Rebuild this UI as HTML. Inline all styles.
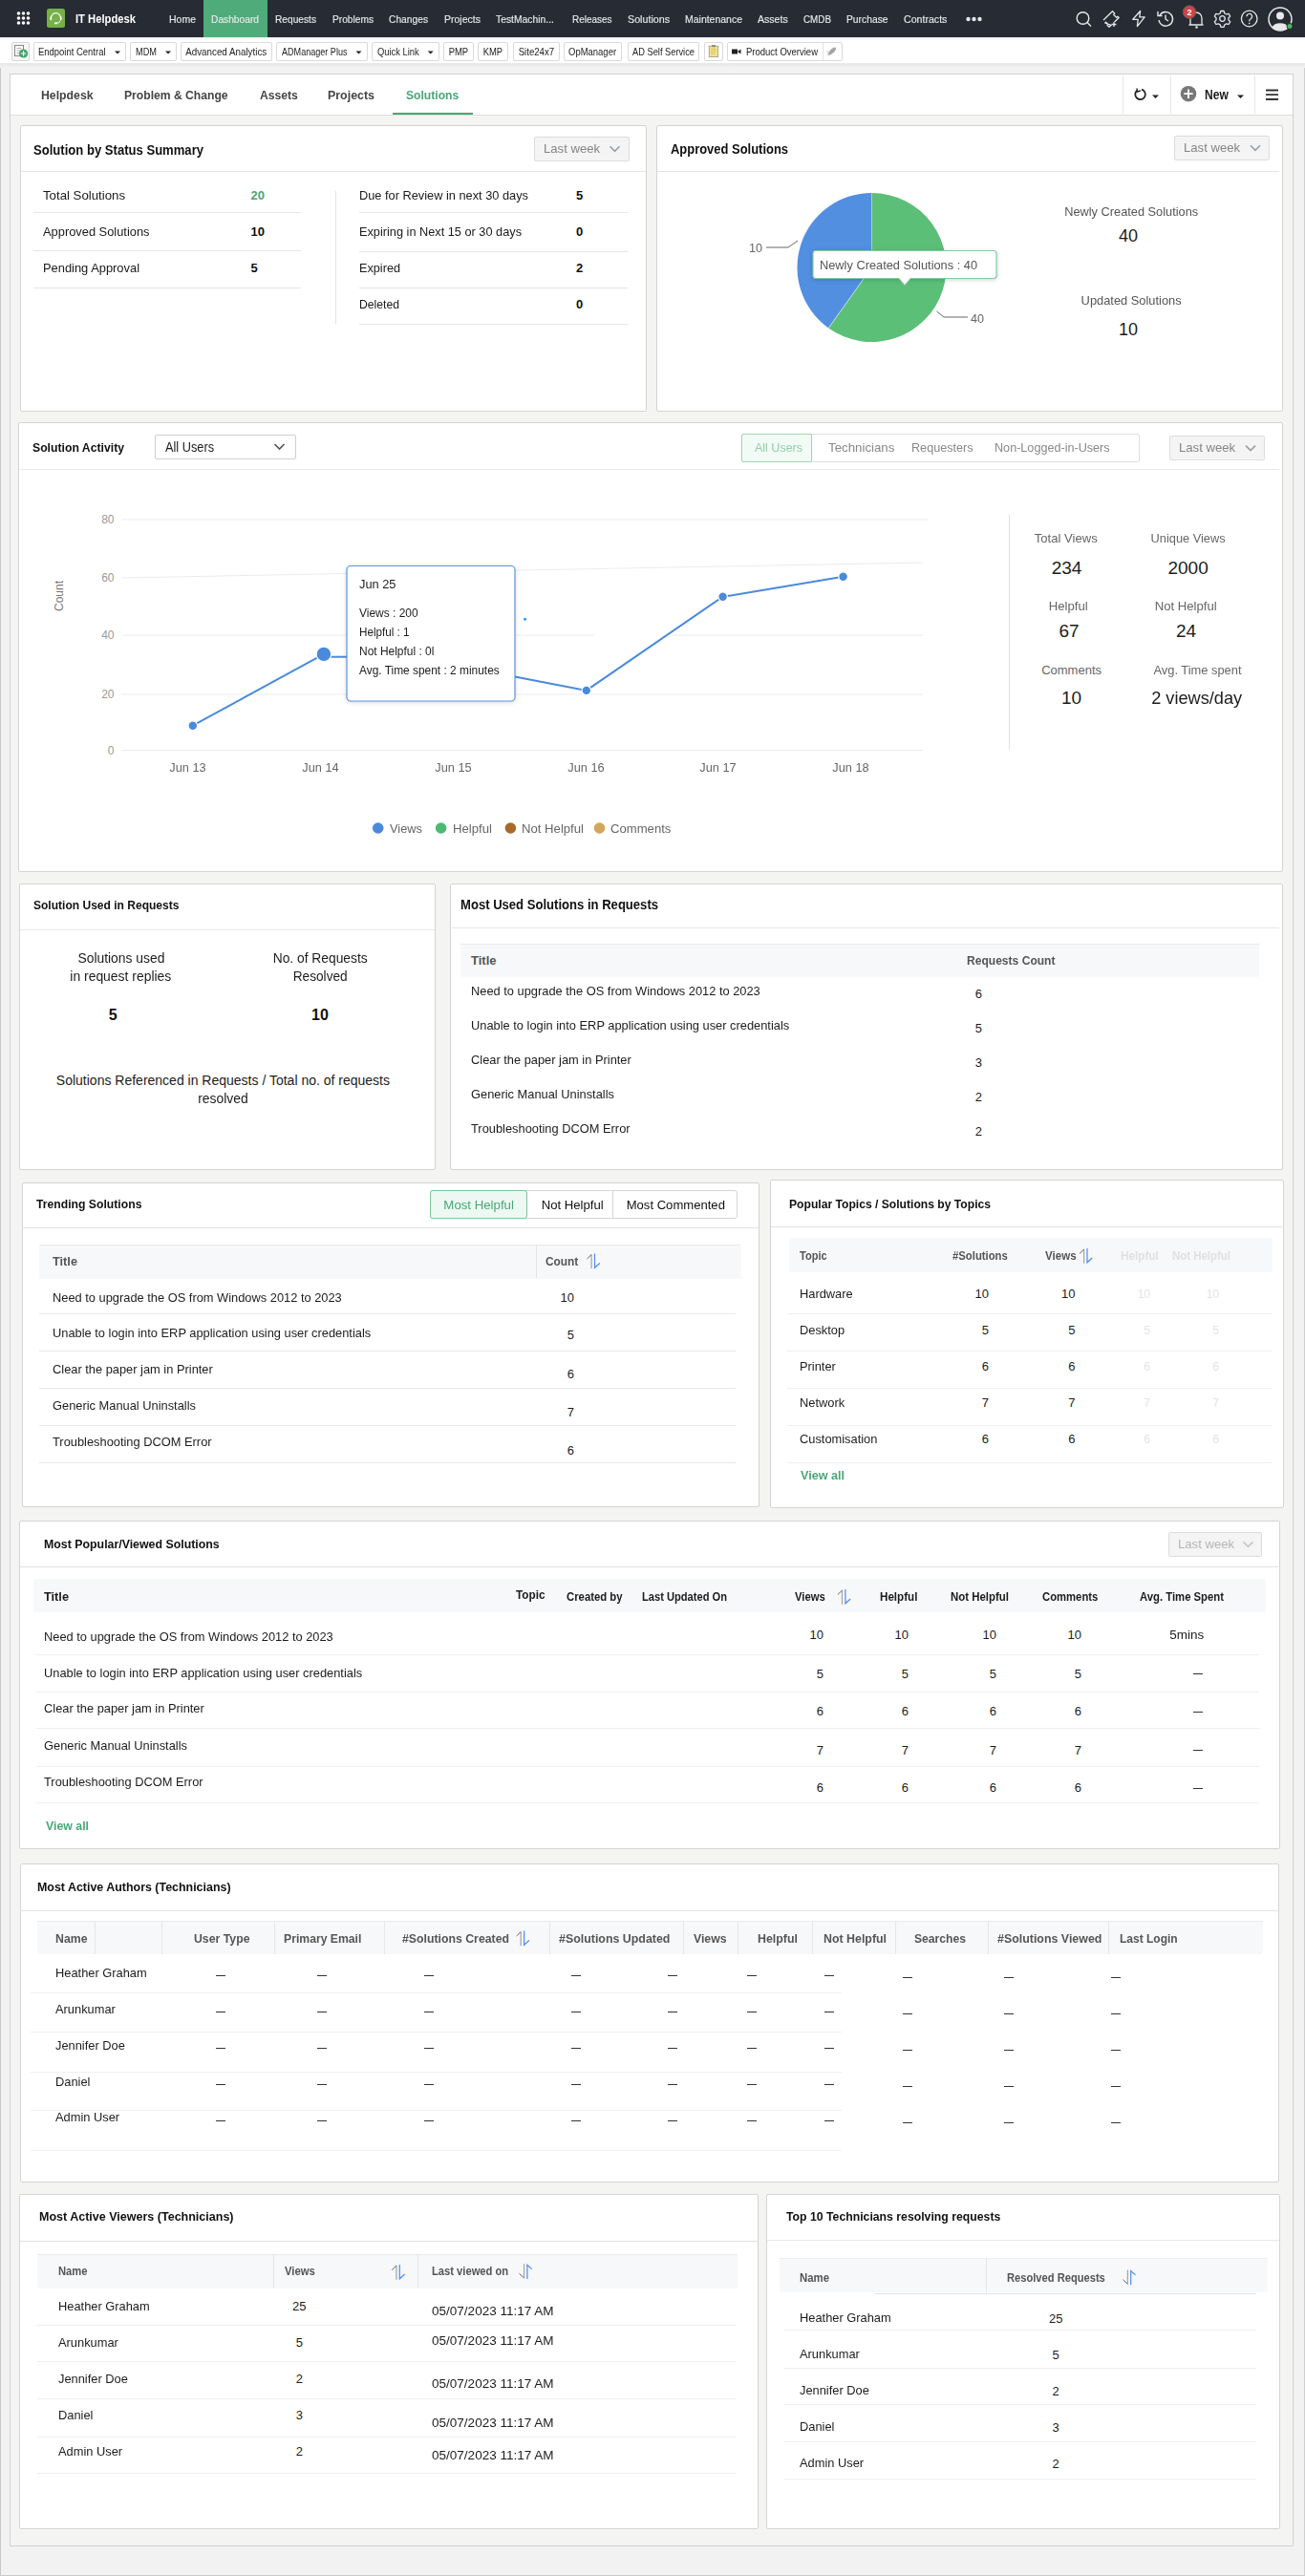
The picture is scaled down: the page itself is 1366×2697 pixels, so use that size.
<!DOCTYPE html>
<html><head><meta charset="utf-8"><title>Solutions Dashboard</title>
<style>
html,body{margin:0;padding:0;}
body{width:1366px;height:2697px;position:relative;overflow:hidden;font-family:"Liberation Sans",sans-serif;background:#f1f1f1;}
#bg>div{position:absolute;}
#tx>span{position:absolute;white-space:nowrap;}
svg{position:absolute;left:0;top:0;}
</style></head><body>
<div id="bg">
<div style="left:0px;top:0px;width:1366px;height:2697px;background:#f2f2f2;"></div>
<div style="left:10px;top:77px;width:1344px;height:2589px;background:#f4f4f2;border:1px solid #d2d2d2;box-sizing:border-box;"></div>
<div style="left:11px;top:78px;width:1342px;height:42px;background:#ffffff;"></div>
<div style="left:11px;top:120px;width:1342px;height:1px;background:#dedede"></div>
<div style="left:0px;top:71px;width:1px;height:2626px;background:#c9c9c9"></div>
<div style="left:1365px;top:71px;width:1px;height:2626px;background:#cfcfcf"></div>
<div style="left:0px;top:2696px;width:1366px;height:1px;background:#cacaca"></div>
<div style="left:0px;top:0px;width:1366px;height:39px;background:#262b34;"></div>
<div style="left:213px;top:0px;width:67px;height:39px;background:#4fab7a;"></div>
<div style="left:49px;top:9px;width:19px;height:19.5px;background:#76b048;border-radius:2.5px;"></div>
<div style="left:0px;top:39px;width:1366px;height:28px;background:#ffffff;"></div>
<div style="left:0px;top:39px;width:1366px;height:3px;background:linear-gradient(#ededed,#fff);"></div>
<div style="left:0px;top:66px;width:1366px;height:4px;background:linear-gradient(#e6e6e6,#f1f1f1);"></div>
<div style="left:12px;top:44px;width:19px;height:20px;background:#f7f7f7;border:1px solid #d5d5d5;box-sizing:border-box;border-radius:2px;"></div>
<div style="left:34.5px;top:44px;width:97.5px;height:20px;background:#fff;border:1px solid #d9d9d9;box-sizing:border-box;border-radius:2px;"></div>
<div style="left:136px;top:44px;width:49px;height:20px;background:#fff;border:1px solid #d9d9d9;box-sizing:border-box;border-radius:2px;"></div>
<div style="left:189px;top:44px;width:96px;height:20px;background:#fff;border:1px solid #d9d9d9;box-sizing:border-box;border-radius:2px;"></div>
<div style="left:289px;top:44px;width:95.5px;height:20px;background:#fff;border:1px solid #d9d9d9;box-sizing:border-box;border-radius:2px;"></div>
<div style="left:389px;top:44px;width:70.69999999999999px;height:20px;background:#fff;border:1px solid #d9d9d9;box-sizing:border-box;border-radius:2px;"></div>
<div style="left:464px;top:44px;width:31.5px;height:20px;background:#fff;border:1px solid #d9d9d9;box-sizing:border-box;border-radius:2px;"></div>
<div style="left:500.3px;top:44px;width:31.400000000000034px;height:20px;background:#fff;border:1px solid #d9d9d9;box-sizing:border-box;border-radius:2px;"></div>
<div style="left:537px;top:44px;width:48.5px;height:20px;background:#fff;border:1px solid #d9d9d9;box-sizing:border-box;border-radius:2px;"></div>
<div style="left:590px;top:44px;width:61px;height:20px;background:#fff;border:1px solid #d9d9d9;box-sizing:border-box;border-radius:2px;"></div>
<div style="left:656.6px;top:44px;width:75.79999999999995px;height:20px;background:#fff;border:1px solid #d9d9d9;box-sizing:border-box;border-radius:2px;"></div>
<div style="left:737px;top:44px;width:20px;height:20px;background:#fff;border:1px solid #d9d9d9;box-sizing:border-box;border-radius:2px;"></div>
<div style="left:761px;top:44px;width:120.5px;height:20px;background:#fff;border:1px solid #d9d9d9;box-sizing:border-box;border-radius:2px;"></div>
<div style="left:861px;top:45px;width:1px;height:18px;background:#e3e3e3"></div>
<div style="left:411px;top:118px;width:84px;height:2px;background:#48a776;"></div>
<div style="left:1175px;top:79px;width:1px;height:40px;background:#e8e8e8"></div>
<div style="left:1225px;top:79px;width:1px;height:40px;background:#e8e8e8"></div>
<div style="left:1313px;top:79px;width:1px;height:40px;background:#e8e8e8"></div>
<div style="left:21px;top:131px;width:656px;height:300px;background:#fff;border:1px solid #d4d4d4;box-sizing:border-box;border-radius:2px;"></div>
<div style="left:22px;top:179px;width:654px;height:1px;background:#e3e3e3"></div>
<div style="left:559px;top:143px;width:99.5px;height:25.5px;background:#f4f4f4;border:1px solid #dddddd;box-sizing:border-box;border-radius:2px;"></div>
<div style="left:35px;top:222px;width:280px;height:1px;background:#e6e6e6"></div>
<div style="left:35px;top:262px;width:280px;height:1px;background:#e6e6e6"></div>
<div style="left:35px;top:301px;width:280px;height:1px;background:#e6e6e6"></div>
<div style="left:351px;top:200px;width:1px;height:139px;background:#e3e3e3"></div>
<div style="left:376px;top:222px;width:281px;height:1px;background:#e6e6e6"></div>
<div style="left:376px;top:263px;width:281px;height:1px;background:#e6e6e6"></div>
<div style="left:376px;top:301px;width:281px;height:1px;background:#e6e6e6"></div>
<div style="left:376px;top:339px;width:281px;height:1px;background:#e6e6e6"></div>
<div style="left:687px;top:131px;width:656px;height:300px;background:#fff;border:1px solid #d4d4d4;box-sizing:border-box;border-radius:2px;"></div>
<div style="left:688px;top:179px;width:651px;height:1px;background:#e3e3e3"></div>
<div style="left:1229px;top:142px;width:100px;height:25.5px;background:#f4f4f4;border:1px solid #dddddd;box-sizing:border-box;border-radius:2px;"></div>
<div style="left:19px;top:442px;width:1324px;height:471px;background:#fff;border:1px solid #d4d4d4;box-sizing:border-box;border-radius:2px;"></div>
<div style="left:21px;top:491px;width:1318px;height:1px;background:#e8e8e8"></div>
<div style="left:162px;top:455px;width:147.5px;height:26px;background:#fff;border:1px solid #cfcfcf;box-sizing:border-box;border-radius:2px;"></div>
<div style="left:776px;top:454px;width:416.5px;height:29.5px;background:#fff;border:1px solid #e0e0e0;box-sizing:border-box;border-radius:2px;"></div>
<div style="left:776px;top:454px;width:73.5px;height:29.5px;background:#f2faf5;border:1px solid #9fd5b4;box-sizing:border-box;border-radius:2px;"></div>
<div style="left:1224.3px;top:456.4px;width:99.70000000000005px;height:25.30000000000001px;background:#f4f4f4;border:1px solid #dddddd;box-sizing:border-box;border-radius:2px;"></div>
<div style="left:1056px;top:539px;width:1px;height:246px;background:#e3e3e3"></div>
<div style="left:20px;top:924.5px;width:436px;height:300.5px;background:#fff;border:1px solid #d4d4d4;box-sizing:border-box;border-radius:2px;"></div>
<div style="left:21px;top:973px;width:434px;height:1px;background:#e8e8e8"></div>
<div style="left:470.5px;top:924.5px;width:872.5px;height:300.5px;background:#fff;border:1px solid #d4d4d4;box-sizing:border-box;border-radius:2px;"></div>
<div style="left:471px;top:971px;width:868px;height:1px;background:#e8e8e8"></div>
<div style="left:481.5px;top:988px;width:836px;height:35px;background:#f7f8fa;border-radius:2px;"></div>
<div style="left:481.5px;top:988px;width:836.0px;height:1px;background:#e9eaee"></div>
<div style="left:22.5px;top:1238px;width:772.5px;height:340px;background:#fff;border:1px solid #d4d4d4;box-sizing:border-box;border-radius:2px;"></div>
<div style="left:23px;top:1285px;width:771px;height:1px;background:#e3e3e3"></div>
<div style="left:449.5px;top:1246px;width:322px;height:30px;background:#fff;border:1px solid #d5d5d5;box-sizing:border-box;border-radius:3px;"></div>
<div style="left:449.5px;top:1246px;width:102px;height:30px;background:#eef8f2;border:1px solid #7cc79b;box-sizing:border-box;border-radius:3px;"></div>
<div style="left:641px;top:1247px;width:1px;height:29px;background:#d5d5d5"></div>
<div style="left:41px;top:1303.5px;width:734.5px;height:35px;background:#f7f8fa;border-radius:2px;"></div>
<div style="left:41px;top:1303px;width:734px;height:1px;background:#e8e9ec"></div>
<div style="left:561px;top:1304px;width:1px;height:34px;background:#e3e4e8"></div>
<div style="left:41px;top:1375px;width:729px;height:1px;background:#e8e8e8"></div>
<div style="left:41px;top:1414px;width:729px;height:1px;background:#e8e8e8"></div>
<div style="left:41px;top:1453px;width:729px;height:1px;background:#e8e8e8"></div>
<div style="left:41px;top:1492px;width:729px;height:1px;background:#e8e8e8"></div>
<div style="left:41px;top:1531px;width:729px;height:1px;background:#e8e8e8"></div>
<div style="left:806px;top:1235px;width:538px;height:344px;background:#fff;border:1px solid #d4d4d4;box-sizing:border-box;border-radius:2px;"></div>
<div style="left:807px;top:1284px;width:535px;height:1px;background:#e3e3e3"></div>
<div style="left:826px;top:1296px;width:505.5px;height:35.5px;background:#f7f8fa;border-radius:2px;"></div>
<div style="left:824px;top:1375px;width:508px;height:1px;background:#efefef"></div>
<div style="left:824px;top:1414px;width:508px;height:1px;background:#efefef"></div>
<div style="left:824px;top:1453px;width:508px;height:1px;background:#efefef"></div>
<div style="left:824px;top:1492px;width:508px;height:1px;background:#efefef"></div>
<div style="left:824px;top:1531px;width:508px;height:1px;background:#efefef"></div>
<div style="left:20px;top:1592px;width:1320px;height:344px;background:#fff;border:1px solid #d4d4d4;box-sizing:border-box;border-radius:2px;"></div>
<div style="left:21px;top:1640px;width:1317px;height:1px;background:#e3e3e3"></div>
<div style="left:1222.6px;top:1604px;width:98.90000000000009px;height:25.700000000000045px;background:#f4f4f4;border:1px solid #dddddd;box-sizing:border-box;border-radius:2px;"></div>
<div style="left:34.5px;top:1653.3px;width:1290.5px;height:35px;background:#f7f8fa;border-radius:2px;"></div>
<div style="left:1249px;top:1752px;width:10px;height:1px;background:#333"></div>
<div style="left:1249px;top:1792px;width:10px;height:1px;background:#333"></div>
<div style="left:1249px;top:1832px;width:10px;height:1px;background:#333"></div>
<div style="left:1249px;top:1872px;width:10px;height:1px;background:#333"></div>
<div style="left:38px;top:1731.5px;width:1280px;height:1px;background:#efefef"></div>
<div style="left:38px;top:1770.5px;width:1280px;height:1px;background:#efefef"></div>
<div style="left:38px;top:1809px;width:1280px;height:1px;background:#efefef"></div>
<div style="left:38px;top:1848.5px;width:1280px;height:1px;background:#efefef"></div>
<div style="left:38px;top:1887px;width:1280px;height:1px;background:#efefef"></div>
<div style="left:20.5px;top:1950.5px;width:1318.5px;height:334.0px;background:#fff;border:1px solid #d4d4d4;box-sizing:border-box;border-radius:2px;"></div>
<div style="left:21px;top:1999.5px;width:1317px;height:1px;background:#e3e3e3"></div>
<div style="left:38.7px;top:2011px;width:1283.3px;height:34.7px;background:#f7f8fa;border-radius:2px;"></div>
<div style="left:38.7px;top:2011px;width:1283.3px;height:1px;background:#e9eaee"></div>
<div style="left:99px;top:2011px;width:1px;height:35px;background:#e6e7ea"></div>
<div style="left:169px;top:2011px;width:1px;height:35px;background:#e6e7ea"></div>
<div style="left:287px;top:2011px;width:1px;height:35px;background:#e6e7ea"></div>
<div style="left:402px;top:2011px;width:1px;height:35px;background:#e6e7ea"></div>
<div style="left:575px;top:2011px;width:1px;height:35px;background:#e6e7ea"></div>
<div style="left:715px;top:2011px;width:1px;height:35px;background:#e6e7ea"></div>
<div style="left:772px;top:2011px;width:1px;height:35px;background:#e6e7ea"></div>
<div style="left:850px;top:2011px;width:1px;height:35px;background:#e6e7ea"></div>
<div style="left:937px;top:2011px;width:1px;height:35px;background:#e6e7ea"></div>
<div style="left:1034px;top:2011px;width:1px;height:35px;background:#e6e7ea"></div>
<div style="left:1160px;top:2011px;width:1px;height:35px;background:#e6e7ea"></div>
<div style="left:226px;top:2068px;width:10px;height:1px;background:#333"></div>
<div style="left:332px;top:2068px;width:10px;height:1px;background:#333"></div>
<div style="left:444px;top:2068px;width:10px;height:1px;background:#333"></div>
<div style="left:598px;top:2068px;width:10px;height:1px;background:#333"></div>
<div style="left:699px;top:2068px;width:10px;height:1px;background:#333"></div>
<div style="left:782px;top:2068px;width:10px;height:1px;background:#333"></div>
<div style="left:863px;top:2068px;width:10px;height:1px;background:#333"></div>
<div style="left:945px;top:2070px;width:10px;height:1px;background:#333"></div>
<div style="left:1051px;top:2070px;width:10px;height:1px;background:#333"></div>
<div style="left:1163px;top:2070px;width:10px;height:1px;background:#333"></div>
<div style="left:226px;top:2106px;width:10px;height:1px;background:#333"></div>
<div style="left:332px;top:2106px;width:10px;height:1px;background:#333"></div>
<div style="left:444px;top:2106px;width:10px;height:1px;background:#333"></div>
<div style="left:598px;top:2106px;width:10px;height:1px;background:#333"></div>
<div style="left:699px;top:2106px;width:10px;height:1px;background:#333"></div>
<div style="left:782px;top:2106px;width:10px;height:1px;background:#333"></div>
<div style="left:863px;top:2106px;width:10px;height:1px;background:#333"></div>
<div style="left:945px;top:2108px;width:10px;height:1px;background:#333"></div>
<div style="left:1051px;top:2108px;width:10px;height:1px;background:#333"></div>
<div style="left:1163px;top:2108px;width:10px;height:1px;background:#333"></div>
<div style="left:226px;top:2144px;width:10px;height:1px;background:#333"></div>
<div style="left:332px;top:2144px;width:10px;height:1px;background:#333"></div>
<div style="left:444px;top:2144px;width:10px;height:1px;background:#333"></div>
<div style="left:598px;top:2144px;width:10px;height:1px;background:#333"></div>
<div style="left:699px;top:2144px;width:10px;height:1px;background:#333"></div>
<div style="left:782px;top:2144px;width:10px;height:1px;background:#333"></div>
<div style="left:863px;top:2144px;width:10px;height:1px;background:#333"></div>
<div style="left:945px;top:2146px;width:10px;height:1px;background:#333"></div>
<div style="left:1051px;top:2146px;width:10px;height:1px;background:#333"></div>
<div style="left:1163px;top:2146px;width:10px;height:1px;background:#333"></div>
<div style="left:226px;top:2182px;width:10px;height:1px;background:#333"></div>
<div style="left:332px;top:2182px;width:10px;height:1px;background:#333"></div>
<div style="left:444px;top:2182px;width:10px;height:1px;background:#333"></div>
<div style="left:598px;top:2182px;width:10px;height:1px;background:#333"></div>
<div style="left:699px;top:2182px;width:10px;height:1px;background:#333"></div>
<div style="left:782px;top:2182px;width:10px;height:1px;background:#333"></div>
<div style="left:863px;top:2182px;width:10px;height:1px;background:#333"></div>
<div style="left:945px;top:2184px;width:10px;height:1px;background:#333"></div>
<div style="left:1051px;top:2184px;width:10px;height:1px;background:#333"></div>
<div style="left:1163px;top:2184px;width:10px;height:1px;background:#333"></div>
<div style="left:226px;top:2220px;width:10px;height:1px;background:#333"></div>
<div style="left:332px;top:2220px;width:10px;height:1px;background:#333"></div>
<div style="left:444px;top:2220px;width:10px;height:1px;background:#333"></div>
<div style="left:598px;top:2220px;width:10px;height:1px;background:#333"></div>
<div style="left:699px;top:2220px;width:10px;height:1px;background:#333"></div>
<div style="left:782px;top:2220px;width:10px;height:1px;background:#333"></div>
<div style="left:863px;top:2220px;width:10px;height:1px;background:#333"></div>
<div style="left:945px;top:2222px;width:10px;height:1px;background:#333"></div>
<div style="left:1051px;top:2222px;width:10px;height:1px;background:#333"></div>
<div style="left:1163px;top:2222px;width:10px;height:1px;background:#333"></div>
<div style="left:32px;top:2085.5px;width:849px;height:1px;background:#efefef"></div>
<div style="left:32px;top:2126.5px;width:849px;height:1px;background:#efefef"></div>
<div style="left:32px;top:2169px;width:849px;height:1px;background:#efefef"></div>
<div style="left:32px;top:2209px;width:849px;height:1px;background:#efefef"></div>
<div style="left:32px;top:2250.5px;width:849px;height:1px;background:#efefef"></div>
<div style="left:20px;top:2297px;width:774px;height:351px;background:#fff;border:1px solid #d4d4d4;box-sizing:border-box;border-radius:2px;"></div>
<div style="left:21px;top:2346px;width:772px;height:1px;background:#e3e3e3"></div>
<div style="left:39.2px;top:2361px;width:732.6px;height:35px;background:#f7f8fa;border-radius:2px;"></div>
<div style="left:39px;top:2360px;width:733px;height:1px;background:#e8e9ec"></div>
<div style="left:285.7px;top:2361px;width:1px;height:35px;background:#e3e4e8"></div>
<div style="left:437px;top:2361px;width:1px;height:35px;background:#e3e4e8"></div>
<div style="left:39px;top:2433.5px;width:732px;height:1px;background:#efefef"></div>
<div style="left:39px;top:2472px;width:732px;height:1px;background:#efefef"></div>
<div style="left:39px;top:2511px;width:732px;height:1px;background:#efefef"></div>
<div style="left:39px;top:2550.5px;width:732px;height:1px;background:#efefef"></div>
<div style="left:39px;top:2589px;width:732px;height:1px;background:#efefef"></div>
<div style="left:802px;top:2296.5px;width:538px;height:351.5px;background:#fff;border:1px solid #d4d4d4;box-sizing:border-box;border-radius:2px;"></div>
<div style="left:803px;top:2345px;width:536px;height:1px;background:#e8e8e8"></div>
<div style="left:815.6px;top:2364px;width:511.6px;height:36.3px;background:#f7f8fa;border-radius:2px;"></div>
<div style="left:815px;top:2364px;width:512px;height:1px;background:#eceef0"></div>
<div style="left:1032px;top:2365px;width:1px;height:35px;background:#e3e4e8"></div>
<div style="left:916px;top:2401px;width:399px;height:1px;background:#dfe1e5"></div>
<div style="left:820px;top:2439px;width:495px;height:1px;background:#efefef"></div>
<div style="left:820px;top:2478.5px;width:495px;height:1px;background:#efefef"></div>
<div style="left:820px;top:2517px;width:495px;height:1px;background:#efefef"></div>
<div style="left:820px;top:2556px;width:495px;height:1px;background:#efefef"></div>
<div style="left:820px;top:2595px;width:495px;height:1px;background:#efefef"></div>
</div>
<svg width="1366" height="2697" viewBox="0 0 1366 2697">
<circle cx="19.5" cy="14" r="1.8" fill="#fff"/>
<circle cx="19.5" cy="19" r="1.8" fill="#fff"/>
<circle cx="19.5" cy="24" r="1.8" fill="#fff"/>
<circle cx="24.5" cy="14" r="1.8" fill="#fff"/>
<circle cx="24.5" cy="19" r="1.8" fill="#fff"/>
<circle cx="24.5" cy="24" r="1.8" fill="#fff"/>
<circle cx="29.5" cy="14" r="1.8" fill="#fff"/>
<circle cx="29.5" cy="19" r="1.8" fill="#fff"/>
<circle cx="29.5" cy="24" r="1.8" fill="#fff"/>
<path d="M53.6 20 v-1.5 a4.9 4.9 0 0 1 9.8 0 v1.5" fill="none" stroke="#fff" stroke-width="1.1"/><path d="M54 16.8 a1.6 2.4 0 0 0 0 4.8z" fill="#fff"/><path d="M63 16.8 a1.6 2.4 0 0 1 0 4.8z" fill="#fff"/><path d="M63 21.5 q0 2.8 -4 2.8" fill="none" stroke="#fff" stroke-width="0.9"/><ellipse cx="58.5" cy="24.3" rx="1.7" ry="1.1" fill="#fff"/>
<circle cx="1013.5" cy="20" r="2.2" fill="#e4e6e9"/>
<circle cx="1019.5" cy="20" r="2.2" fill="#e4e6e9"/>
<circle cx="1025.5" cy="20" r="2.2" fill="#e4e6e9"/>
<circle cx="1133.5" cy="19" r="6.3" fill="none" stroke="#e8e8e8" stroke-width="1.4"/><line x1="1138" y1="23.5" x2="1142" y2="27.5" stroke="#e8e8e8" stroke-width="1.5"/>
<path d="M1155 21 L1164.5 11.8 L1166.8 14.1 L1165.6 15.3 L1168.7 18.4 L1169.9 17.2 L1171.2 18.5 L1166.5 23 M1163.2 26.3 L1161 28.3 L1158.8 26.1 L1159.7 25.2 L1157.6 23.1 L1156.7 24 Z" fill="none" stroke="#e8e8e8" stroke-width="1.3" stroke-linejoin="round"/><path d="M1163.5 25.5 h5 M1166 23 v5" stroke="#e8e8e8" stroke-width="1.3"/>
<path d="M1193.6 11.5 L1185.8 20.3 H1191.2 L1190.4 27.6 L1198.2 17.9 H1192.8 Z" fill="none" stroke="#e8e8e8" stroke-width="1.3" stroke-linejoin="round"/>
<path d="M1214 16 a7.3 7.3 0 1 1 -1 5" fill="none" stroke="#e8e8e8" stroke-width="1.4"/><path d="M1212 12 v4.5 h4.5" fill="none" stroke="#e8e8e8" stroke-width="1.4"/><path d="M1220 15.5 v4.5 l3 2" fill="none" stroke="#e8e8e8" stroke-width="1.4"/>
<path d="M1246 26 v-7 a6 6 0 0 1 12 0 v7 h1.5 h-15 z" fill="none" stroke="#e8e8e8" stroke-width="1.3"/><circle cx="1252.5" cy="28.5" r="1.3" fill="#e8e8e8"/>
<circle cx="1245" cy="12.6" r="6.8" fill="#c84646" stroke="#5a5f66" stroke-width="0.8"/>
<g transform="translate(1279.5,19.5)" fill="none" stroke="#e8e8e8" stroke-width="1.3"><circle r="2.8"/><path d="M-1.6 -8 h3.2 l0.6 2.3 l2.1 1.2 l2.3 -0.7 l1.6 2.8 l-1.7 1.6 v2.4 l1.7 1.6 l-1.6 2.8 l-2.3 -0.7 l-2.1 1.2 l-0.6 2.3 h-3.2 l-0.6 -2.3 l-2.1 -1.2 l-2.3 0.7 l-1.6 -2.8 l1.7 -1.6 v-2.4 l-1.7 -1.6 l1.6 -2.8 l2.3 0.7 l2.1 -1.2 z" stroke-linejoin="round"/></g>
<circle cx="1307.7" cy="19.5" r="8.3" fill="none" stroke="#e8e8e8" stroke-width="1.3"/>
<path d="M1305 17.3 a2.8 2.8 0 1 1 4.2 2.4 c-1 .6 -1.5 1.1 -1.5 2.3 v0.6" fill="none" stroke="#e8e8e8" stroke-width="1.2"/><circle cx="1307.7" cy="24.6" r="0.8" fill="#e8e8e8"/>
<circle cx="1340" cy="20" r="12" fill="none" stroke="#e8e8e8" stroke-width="1.5"/><circle cx="1340" cy="16.5" r="4" fill="#e8e8e8"/><path d="M1331.5 28.5 a9 6.5 0 0 1 17 0 a12 12 0 0 1 -17 0z" fill="#e8e8e8"/><circle cx="1350" cy="27.5" r="3" fill="#4fb860" stroke="#252a33" stroke-width="1"/>
<rect x="15.5" y="47.5" width="9" height="11" fill="#fff" stroke="#888" stroke-width="1"/><path d="M17.5 50.5 h5 M17.5 53 h5 M17.5 55.5 h3" stroke="#999" stroke-width="0.8"/><circle cx="24.6" cy="56" r="4.6" fill="#3da56b"/><path d="M24.6 53.3 v5.4 M21.9 56 h5.4" stroke="#fff" stroke-width="1.2"/>
<path d="M120 53.5 h6 l-3 3z" fill="#222"/>
<path d="M173 53.5 h6 l-3 3z" fill="#222"/>
<path d="M372.5 53.5 h6 l-3 3z" fill="#222"/>
<path d="M447.7 53.5 h6 l-3 3z" fill="#222"/>
<rect x="742.2" y="48.2" width="9.5" height="11.3" fill="#f2df88" stroke="#9a9a8a" stroke-width="0.8"/><path d="M744 51.5 h5.5 M744 53.8 h5.5 M744 56 h4" stroke="#c9b664" stroke-width="0.7"/><rect x="745" y="47" width="4" height="2.2" rx="0.6" fill="#8a8a8a"/>
<rect x="766" y="51.5" width="6" height="5" fill="#222"/><path d="M772 54 l3.5 -2.5 v5z" fill="#222"/>
<ellipse cx="871" cy="53.5" rx="5.2" ry="2.1" transform="rotate(-45 871 53.5)" fill="#a5a5a5"/><path d="M867.5 55 l-2.5 3.5 l3.5 -2.5z M866.5 53 l-1.5 1.5 h2z M869 57.5 l-1.5 1.5 v-2z" fill="#b5b5b5"/>
<path d="M1190.5 94.5 a5.3 5.3 0 1 0 4.5 -0.8" fill="none" stroke="#222" stroke-width="1.8"/><path d="M1190 92.5 l0.5 3.5 l3.3 -1" fill="none" stroke="#222" stroke-width="1.4"/>
<path d="M1206 99.5 h7 l-3.5 3.5z" fill="#222"/>
<circle cx="1244" cy="98.2" r="8.3" fill="#777"/><path d="M1244 93.5 v9.4 M1239.3 98.2 h9.4" stroke="#fff" stroke-width="1.8"/>
<path d="M1295 99.5 h7 l-3.5 3.5z" fill="#222"/>
<path d="M1325 94.5 h13 M1325 99.2 h13 M1325 104 h13" stroke="#333" stroke-width="1.8"/>
<path d="M638.5 153.25 l5 5 l5 -5" fill="none" stroke="#9aa0a3" stroke-width="1.7"/>
<path d="M1309 152.25 l5 5 l5 -5" fill="none" stroke="#9aa0a3" stroke-width="1.7"/>
<path d="M912.5 280 L912.5 202 A78 78 0 1 1 867.21 343.50 Z" fill="#5bbf78"/>
<path d="M912.5 280 L867.21 343.50 A78 78 0 0 1 912.5 202 Z" fill="#528fe0"/>
<line x1="912.5" y1="202" x2="912.5" y2="280" stroke="#fff" stroke-width="0.5" stroke-opacity="0.6"/><line x1="912.5" y1="280" x2="867.21" y2="343.50" stroke="#fff" stroke-width="0.7" stroke-opacity="0.8"/>
<path d="M802 259 h23 l10 -7" fill="none" stroke="#666" stroke-width="1"/>
<path d="M980.5 326 l7.5 6 h25" fill="none" stroke="#666" stroke-width="1"/>
<rect x="851" y="262.5" width="192" height="29" rx="3" fill="#fff" stroke="#7fcf9c" stroke-width="1.2" style="filter:drop-shadow(0 1px 2px rgba(0,0,0,0.18))"/><path d="M941 291 l6 7 l6 -7z" fill="#fff"/><path d="M941 291.6 l6 7 l6 -7" fill="none" stroke="#cde" stroke-width="0.6"/>
<path d="M287.5 465 l5 5 l5 -5" fill="none" stroke="#555" stroke-width="1.6"/>
<path d="M1304 466.54999999999995 l5 5 l5 -5" fill="none" stroke="#9aa0a3" stroke-width="1.7"/>
<line x1="127.5" y1="544" x2="971" y2="544" stroke="#ebebeb" stroke-width="1"/>
<line x1="127.5" y1="605" x2="966" y2="589" stroke="#ebebeb" stroke-width="1"/>
<line x1="127.5" y1="665" x2="622" y2="665" stroke="#ebebeb" stroke-width="1"/><line x1="702" y1="665" x2="966" y2="665" stroke="#ebebeb" stroke-width="1"/>
<line x1="127.5" y1="727" x2="966" y2="727" stroke="#ebebeb" stroke-width="1"/>
<line x1="127.5" y1="785.5" x2="966" y2="785.5" stroke="#ebebeb" stroke-width="1"/>
<polyline points="201.8,759.7 338.9,684.9" fill="none" stroke="#4a89dc" stroke-width="2"/>
<polyline points="338.9,687.7 364,687.7" fill="none" stroke="#4a89dc" stroke-width="2"/>
<polyline points="539,708.4 613.8,722.9 756.6,624.8 882.6,603.7" fill="none" stroke="#4a89dc" stroke-width="2"/>
<circle cx="201.8" cy="759.7" r="4.8" fill="#4a89dc" stroke="#fff" stroke-width="1.2"/>
<circle cx="338.9" cy="684.9" r="7.8" fill="#4a89dc" stroke="#fff" stroke-width="1.2"/>
<circle cx="613.8" cy="722.9" r="4.8" fill="#4a89dc" stroke="#fff" stroke-width="1.2"/>
<circle cx="756.6" cy="624.8" r="4.8" fill="#4a89dc" stroke="#fff" stroke-width="1.2"/>
<circle cx="882.6" cy="603.7" r="4.8" fill="#4a89dc" stroke="#fff" stroke-width="1.2"/>
<circle cx="549.5" cy="648.3" r="1.5" fill="#1e9cf0"/>
<rect x="363" y="592.5" width="176" height="141.5" rx="4" fill="#fff" stroke="#5b95e0" stroke-width="1.2" style="filter:drop-shadow(0 1px 2px rgba(0,0,0,0.15))"/>
<circle cx="395.7" cy="867" r="5.8" fill="#4a89dc"/>
<circle cx="461.6" cy="867" r="5.8" fill="#4dba73"/>
<circle cx="534.4" cy="867" r="5.8" fill="#a8692a"/>
<circle cx="627.5" cy="867" r="5.8" fill="#d4a55a"/>
<path d="M619.1 1313.5 V1328.2" stroke="#a8a8a8" stroke-width="1.3"/><path d="M619.1 1313.5 L614.5 1318.0" stroke="#555" stroke-width="0.9"/><path d="M622.5 1312.5 V1327.3 L627.8 1322.5" fill="none" stroke="#4c8cf5" stroke-width="1.2"/>
<path d="M1134.6 1308 V1322.7" stroke="#a8a8a8" stroke-width="1.3"/><path d="M1134.6 1308 L1130 1312.5" stroke="#555" stroke-width="0.9"/><path d="M1138 1307 V1321.8 L1143.3 1317" fill="none" stroke="#4c8cf5" stroke-width="1.2"/>
<path d="M1301.5 1614.35 l5 5 l5 -5" fill="none" stroke="#c5c8ca" stroke-width="1.7"/>
<path d="M881.5 1665 V1679.7" stroke="#a8a8a8" stroke-width="1.3"/><path d="M881.5 1665 L876.9 1669.5" stroke="#555" stroke-width="0.9"/><path d="M884.9 1664 V1678.8 L890.1999999999999 1674" fill="none" stroke="#4c8cf5" stroke-width="1.2"/>
<path d="M545.2 2022.5 V2037.2" stroke="#a8a8a8" stroke-width="1.3"/><path d="M545.2 2022.5 L540.6 2027.0" stroke="#555" stroke-width="0.9"/><path d="M548.6 2021.5 V2036.3 L553.9 2031.5" fill="none" stroke="#4c8cf5" stroke-width="1.2"/>
<path d="M414.90000000000003 2372 V2386.7" stroke="#a8a8a8" stroke-width="1.3"/><path d="M414.90000000000003 2372 L410.3 2376.5" stroke="#555" stroke-width="0.9"/><path d="M418.3 2371 V2385.8 L423.6 2381" fill="none" stroke="#4c8cf5" stroke-width="1.2"/>
<path d="M548.6 2370.2 V2385.0" stroke="#a8a8a8" stroke-width="1.3"/><path d="M548.6 2385.0 L543.5 2380.2999999999997" stroke="#555" stroke-width="0.9"/><path d="M551.9 2385.8999999999996 V2371.2999999999997 L556.7 2375.6" fill="none" stroke="#4c8cf5" stroke-width="1.2"/>
<path d="M1180.3999999999999 2376.5 V2391.3" stroke="#a8a8a8" stroke-width="1.3"/><path d="M1180.3999999999999 2391.3 L1175.3 2386.6" stroke="#555" stroke-width="0.9"/><path d="M1183.7 2392.2 V2377.6 L1188.5 2381.9" fill="none" stroke="#4c8cf5" stroke-width="1.2"/>
</svg>
<div id="tx">
<span style="left:79.00px;top:9.50px;font-size:13px;line-height:20px;color:#fff;font-weight:bold;transform:scaleX(0.8635);transform-origin:left center;">IT Helpdesk</span>
<span style="left:177.00px;top:10.00px;font-size:11.5px;line-height:20px;color:#e8eaed;transform:scaleX(0.9128);transform-origin:left center;-webkit-text-stroke:0.15px #e8eaed;">Home</span>
<span style="left:221.00px;top:10.00px;font-size:11.5px;line-height:20px;color:#e8eaed;transform:scaleX(0.8888);transform-origin:left center;-webkit-text-stroke:0.15px #e8eaed;">Dashboard</span>
<span style="left:288.00px;top:10.00px;font-size:11.5px;line-height:20px;color:#e8eaed;transform:scaleX(0.8851);transform-origin:left center;-webkit-text-stroke:0.15px #e8eaed;">Requests</span>
<span style="left:348.00px;top:10.00px;font-size:11.5px;line-height:20px;color:#e8eaed;transform:scaleX(0.8853);transform-origin:left center;-webkit-text-stroke:0.15px #e8eaed;">Problems</span>
<span style="left:407.00px;top:10.00px;font-size:11.5px;line-height:20px;color:#e8eaed;transform:scaleX(0.8907);transform-origin:left center;-webkit-text-stroke:0.15px #e8eaed;">Changes</span>
<span style="left:464.50px;top:10.00px;font-size:11.5px;line-height:20px;color:#e8eaed;transform:scaleX(0.9148);transform-origin:left center;-webkit-text-stroke:0.15px #e8eaed;">Projects</span>
<span style="left:519.00px;top:10.00px;font-size:11.5px;line-height:20px;color:#e8eaed;transform:scaleX(0.9004);transform-origin:left center;-webkit-text-stroke:0.15px #e8eaed;">TestMachin...</span>
<span style="left:598.50px;top:10.00px;font-size:11.5px;line-height:20px;color:#e8eaed;transform:scaleX(0.8657);transform-origin:left center;-webkit-text-stroke:0.15px #e8eaed;">Releases</span>
<span style="left:656.50px;top:10.00px;font-size:11.5px;line-height:20px;color:#e8eaed;transform:scaleX(0.9301);transform-origin:left center;-webkit-text-stroke:0.15px #e8eaed;">Solutions</span>
<span style="left:716.70px;top:10.00px;font-size:11.5px;line-height:20px;color:#e8eaed;transform:scaleX(0.9112);transform-origin:left center;-webkit-text-stroke:0.15px #e8eaed;">Maintenance</span>
<span style="left:793.00px;top:10.00px;font-size:11.5px;line-height:20px;color:#e8eaed;transform:scaleX(0.9186);transform-origin:left center;-webkit-text-stroke:0.15px #e8eaed;">Assets</span>
<span style="left:840.80px;top:10.00px;font-size:11.5px;line-height:20px;color:#e8eaed;transform:scaleX(0.8565);transform-origin:left center;-webkit-text-stroke:0.15px #e8eaed;">CMDB</span>
<span style="left:886.00px;top:10.00px;font-size:11.5px;line-height:20px;color:#e8eaed;transform:scaleX(0.8954);transform-origin:left center;-webkit-text-stroke:0.15px #e8eaed;">Purchase</span>
<span style="left:945.60px;top:10.00px;font-size:11.5px;line-height:20px;color:#e8eaed;transform:scaleX(0.9226);transform-origin:left center;-webkit-text-stroke:0.15px #e8eaed;">Contracts</span>
<span style="left:1242.50px;top:7.00px;font-size:9px;line-height:12px;color:#fff;font-weight:bold;">2</span>
<span style="left:40.00px;top:44.00px;font-size:11px;line-height:20px;color:#1c1c1c;transform:scaleX(0.8604);transform-origin:left center;">Endpoint Central</span>
<span style="left:141.50px;top:44.00px;font-size:11px;line-height:20px;color:#1c1c1c;transform:scaleX(0.8375);transform-origin:left center;">MDM</span>
<span style="left:189.31px;top:44.00px;font-size:11px;line-height:20px;color:#1c1c1c;transform:scaleX(0.8911);transform-origin:center center;">Advanced Analytics</span>
<span style="left:294.50px;top:44.00px;font-size:11px;line-height:20px;color:#1c1c1c;transform:scaleX(0.8238);transform-origin:left center;">ADManager Plus</span>
<span style="left:394.50px;top:44.00px;font-size:11px;line-height:20px;color:#1c1c1c;transform:scaleX(0.8510);transform-origin:left center;">Quick Link</span>
<span style="left:467.83px;top:44.00px;font-size:11px;line-height:20px;color:#1c1c1c;transform:scaleX(0.8600);transform-origin:center center;">PMP</span>
<span style="left:504.08px;top:44.00px;font-size:11px;line-height:20px;color:#1c1c1c;transform:scaleX(0.8558);transform-origin:center center;">KMP</span>
<span style="left:539.85px;top:44.00px;font-size:11px;line-height:20px;color:#1c1c1c;transform:scaleX(0.8761);transform-origin:center center;">Site24x7</span>
<span style="left:591.46px;top:44.00px;font-size:11px;line-height:20px;color:#1c1c1c;transform:scaleX(0.8608);transform-origin:center center;">OpManager</span>
<span style="left:655.99px;top:44.00px;font-size:11px;line-height:20px;color:#1c1c1c;transform:scaleX(0.8413);transform-origin:center center;">AD Self Service</span>
<span style="left:781.00px;top:44.00px;font-size:11px;line-height:20px;color:#1c1c1c;transform:scaleX(0.8640);transform-origin:left center;">Product Overview</span>
<span style="left:43.00px;top:90.30px;font-size:13.2px;line-height:20px;color:#444;font-weight:bold;transform:scaleX(0.9304);transform-origin:left center;">Helpdesk</span>
<span style="left:130.30px;top:90.30px;font-size:13.2px;line-height:20px;color:#444;font-weight:bold;transform:scaleX(0.9206);transform-origin:left center;">Problem &amp; Change</span>
<span style="left:271.70px;top:90.30px;font-size:13.2px;line-height:20px;color:#444;font-weight:bold;transform:scaleX(0.9217);transform-origin:left center;">Assets</span>
<span style="left:343.40px;top:90.30px;font-size:13.2px;line-height:20px;color:#444;font-weight:bold;transform:scaleX(0.9407);transform-origin:left center;">Projects</span>
<span style="left:424.70px;top:90.30px;font-size:13.2px;line-height:20px;color:#48a776;font-weight:bold;transform:scaleX(0.9198);transform-origin:left center;">Solutions</span>
<span style="left:1260.60px;top:89.00px;font-size:14px;line-height:20px;color:#1c1c1c;font-weight:bold;transform:scaleX(0.8616);transform-origin:left center;">New</span>
<span style="left:35.30px;top:147.00px;font-size:14px;line-height:20px;color:#111;font-weight:bold;transform:scaleX(0.9340);transform-origin:left center;">Solution by Status Summary</span>
<span style="left:569.00px;top:145.75px;font-size:13px;line-height:20px;color:#858585;transform:scaleX(1.0081);transform-origin:left center;">Last week</span>
<span style="left:45.20px;top:194.50px;font-size:13px;line-height:20px;color:#1a1a1a;transform:scaleX(1.0172);transform-origin:left center;">Total Solutions</span>
<span style="left:262.50px;top:194.50px;font-size:13px;line-height:20px;color:#48a776;font-weight:bold;">20</span>
<span style="left:45.20px;top:232.50px;font-size:13px;line-height:20px;color:#1a1a1a;transform:scaleX(0.9891);transform-origin:left center;">Approved Solutions</span>
<span style="left:262.50px;top:232.50px;font-size:13px;line-height:20px;color:#111;font-weight:bold;">10</span>
<span style="left:45.20px;top:271.00px;font-size:13px;line-height:20px;color:#1a1a1a;transform:scaleX(0.9911);transform-origin:left center;">Pending Approval</span>
<span style="left:262.50px;top:271.00px;font-size:13px;line-height:20px;color:#111;font-weight:bold;">5</span>
<span style="left:375.80px;top:194.50px;font-size:13px;line-height:20px;color:#1a1a1a;transform:scaleX(0.9838);transform-origin:left center;">Due for Review in next 30 days</span>
<span style="left:603.00px;top:194.50px;font-size:13px;line-height:20px;color:#111;font-weight:bold;">5</span>
<span style="left:375.80px;top:232.50px;font-size:13px;line-height:20px;color:#1a1a1a;transform:scaleX(0.9803);transform-origin:left center;">Expiring in Next 15 or 30 days</span>
<span style="left:603.00px;top:232.50px;font-size:13px;line-height:20px;color:#111;font-weight:bold;">0</span>
<span style="left:375.80px;top:271.00px;font-size:13px;line-height:20px;color:#1a1a1a;transform:scaleX(0.9756);transform-origin:left center;">Expired</span>
<span style="left:603.00px;top:271.00px;font-size:13px;line-height:20px;color:#111;font-weight:bold;">2</span>
<span style="left:375.80px;top:309.00px;font-size:13px;line-height:20px;color:#1a1a1a;transform:scaleX(0.9374);transform-origin:left center;">Deleted</span>
<span style="left:603.00px;top:309.00px;font-size:13px;line-height:20px;color:#111;font-weight:bold;">0</span>
<span style="left:702.40px;top:146.00px;font-size:14px;line-height:20px;color:#111;font-weight:bold;transform:scaleX(0.9249);transform-origin:left center;">Approved Solutions</span>
<span style="left:1239.00px;top:144.75px;font-size:13px;line-height:20px;color:#858585;transform:scaleX(1.0081);transform-origin:left center;">Last week</span>
<span style="left:784.00px;top:250.00px;font-size:12px;line-height:20px;color:#666;transform:scaleX(1.0490);transform-origin:left center;">10</span>
<span style="left:1015.50px;top:324.00px;font-size:12px;line-height:20px;color:#666;transform:scaleX(1.0490);transform-origin:left center;">40</span>
<span style="left:858.00px;top:267.50px;font-size:13px;line-height:20px;color:#555;transform:scaleX(0.9843);transform-origin:left center;">Newly Created Solutions : 40</span>
<span style="left:1113.33px;top:212.00px;font-size:13px;line-height:20px;color:#555;transform:scaleX(0.9836);transform-origin:center center;">Newly Created Solutions</span>
<span style="left:1170.99px;top:237.00px;font-size:18px;line-height:20px;color:#1c1c1c;">40</span>
<span style="left:1131.38px;top:305.00px;font-size:13px;line-height:20px;color:#555;transform:scaleX(0.9884);transform-origin:center center;">Updated Solutions</span>
<span style="left:1170.99px;top:335.00px;font-size:18px;line-height:20px;color:#1c1c1c;">10</span>
<span style="left:34.00px;top:458.50px;font-size:13px;line-height:20px;color:#111;font-weight:bold;transform:scaleX(0.9405);transform-origin:left center;">Solution Activity</span>
<span style="left:173.20px;top:458.00px;font-size:14px;line-height:20px;color:#1c1c1c;transform:scaleX(0.9106);transform-origin:left center;">All Users</span>
<span style="left:789.70px;top:458.60px;font-size:13px;line-height:20px;color:#8fcfaa;transform:scaleX(0.9614);transform-origin:left center;">All Users</span>
<span style="left:867.00px;top:458.60px;font-size:13px;line-height:20px;color:#888;transform:scaleX(1.0217);transform-origin:left center;">Technicians</span>
<span style="left:954.40px;top:458.60px;font-size:13px;line-height:20px;color:#888;transform:scaleX(0.9718);transform-origin:left center;">Requesters</span>
<span style="left:1041.30px;top:458.60px;font-size:13px;line-height:20px;color:#888;transform:scaleX(0.9705);transform-origin:left center;">Non-Logged-in-Users</span>
<span style="left:1234.30px;top:459.05px;font-size:13px;line-height:20px;color:#858585;transform:scaleX(1.0081);transform-origin:left center;">Last week</span>
<span style="left:106.15px;top:534.00px;font-size:12px;line-height:20px;color:#999;">80</span>
<span style="left:106.15px;top:595.00px;font-size:12px;line-height:20px;color:#999;">60</span>
<span style="left:106.15px;top:655.00px;font-size:12px;line-height:20px;color:#999;">40</span>
<span style="left:106.15px;top:717.00px;font-size:12px;line-height:20px;color:#999;">20</span>
<span style="left:112.83px;top:775.50px;font-size:12px;line-height:20px;color:#999;">0</span>
<span style="left:36.8px;top:614px;width:50px;text-align:center;font-size:12px;line-height:20px;color:#777;transform:rotate(-90deg);">Count</span>
<span style="left:177.19px;top:793.50px;font-size:13px;line-height:20px;color:#666;transform:scaleX(0.9813);transform-origin:center center;">Jun 13</span>
<span style="left:315.99px;top:793.50px;font-size:13px;line-height:20px;color:#666;transform:scaleX(0.9813);transform-origin:center center;">Jun 14</span>
<span style="left:454.79px;top:793.50px;font-size:13px;line-height:20px;color:#666;transform:scaleX(0.9813);transform-origin:center center;">Jun 15</span>
<span style="left:593.59px;top:793.50px;font-size:13px;line-height:20px;color:#666;transform:scaleX(0.9813);transform-origin:center center;">Jun 16</span>
<span style="left:732.39px;top:793.50px;font-size:13px;line-height:20px;color:#666;transform:scaleX(0.9813);transform-origin:center center;">Jun 17</span>
<span style="left:871.19px;top:793.50px;font-size:13px;line-height:20px;color:#666;transform:scaleX(0.9813);transform-origin:center center;">Jun 18</span>
<span style="left:375.50px;top:601.50px;font-size:13px;line-height:20px;color:#1c1c1c;transform:scaleX(0.9865);transform-origin:left center;">Jun 25</span>
<span style="left:376.30px;top:632.00px;font-size:13px;line-height:20px;color:#1c1c1c;transform:scaleX(0.9199);transform-origin:left center;">Views : 200</span>
<span style="left:376.30px;top:651.50px;font-size:13px;line-height:20px;color:#1c1c1c;transform:scaleX(0.8987);transform-origin:left center;">Helpful : 1</span>
<span style="left:376.30px;top:671.60px;font-size:13px;line-height:20px;color:#1c1c1c;transform:scaleX(0.9196);transform-origin:left center;">Not Helpful : 0l</span>
<span style="left:376.30px;top:692.20px;font-size:13px;line-height:20px;color:#1c1c1c;transform:scaleX(0.9160);transform-origin:left center;">Avg. Time spent : 2 minutes</span>
<span style="left:408.00px;top:858.00px;font-size:13px;line-height:20px;color:#666;transform:scaleX(0.9872);transform-origin:left center;">Views</span>
<span style="left:474.00px;top:858.00px;font-size:13px;line-height:20px;color:#666;transform:scaleX(1.0132);transform-origin:left center;">Helpful</span>
<span style="left:546.00px;top:858.00px;font-size:13px;line-height:20px;color:#666;transform:scaleX(1.0108);transform-origin:left center;">Not Helpful</span>
<span style="left:639.00px;top:858.00px;font-size:13px;line-height:20px;color:#666;transform:scaleX(1.0088);transform-origin:left center;">Comments</span>
<span style="left:1082.54px;top:553.50px;font-size:13px;line-height:20px;color:#666;transform:scaleX(1.0075);transform-origin:center center;">Total Views</span>
<span style="left:1203.98px;top:553.50px;font-size:13px;line-height:20px;color:#666;transform:scaleX(0.9843);transform-origin:center center;">Unique Views</span>
<span style="left:1100.65px;top:585.40px;font-size:19px;line-height:20px;color:#1c1c1c;">234</span>
<span style="left:1222.47px;top:585.40px;font-size:19px;line-height:20px;color:#1c1c1c;">2000</span>
<span style="left:1098.37px;top:624.60px;font-size:13px;line-height:20px;color:#666;transform:scaleX(1.0132);transform-origin:center center;">Helpful</span>
<span style="left:1209.35px;top:624.60px;font-size:13px;line-height:20px;color:#666;transform:scaleX(1.0108);transform-origin:center center;">Not Helpful</span>
<span style="left:1108.43px;top:651.30px;font-size:19px;line-height:20px;color:#1c1c1c;">67</span>
<span style="left:1230.93px;top:651.30px;font-size:19px;line-height:20px;color:#1c1c1c;">24</span>
<span style="left:1090.18px;top:691.60px;font-size:13px;line-height:20px;color:#666;">Comments</span>
<span style="left:1206.52px;top:691.60px;font-size:13px;line-height:20px;color:#666;transform:scaleX(0.9896);transform-origin:center center;">Avg. Time spent</span>
<span style="left:1111.03px;top:720.50px;font-size:19px;line-height:20px;color:#1c1c1c;">10</span>
<span style="left:1203.37px;top:720.50px;font-size:19px;line-height:20px;color:#1c1c1c;transform:scaleX(0.9571);transform-origin:center center;">2 views/day</span>
<span style="left:35.00px;top:938.20px;font-size:13px;line-height:20px;color:#111;font-weight:bold;transform:scaleX(0.9255);transform-origin:left center;">Solution Used in Requests</span>
<span style="left:80.78px;top:993.00px;font-size:14px;line-height:20px;color:#1c1c1c;transform:scaleX(0.9909);transform-origin:center center;">Solutions used</span>
<span style="left:73.40px;top:1012.00px;font-size:14px;line-height:20px;color:#1c1c1c;transform:scaleX(0.9943);transform-origin:center center;">in request replies</span>
<span style="left:285.31px;top:993.00px;font-size:14px;line-height:20px;color:#1c1c1c;transform:scaleX(0.9863);transform-origin:center center;">No. of Requests</span>
<span style="left:306.32px;top:1012.00px;font-size:14px;line-height:20px;color:#1c1c1c;transform:scaleX(0.9767);transform-origin:center center;">Resolved</span>
<span style="left:113.85px;top:1053.30px;font-size:16px;line-height:20px;color:#111;font-weight:bold;">5</span>
<span style="left:326.10px;top:1053.30px;font-size:16px;line-height:20px;color:#111;font-weight:bold;">10</span>
<span style="left:58.83px;top:1121.40px;font-size:14px;line-height:20px;color:#1c1c1c;">Solutions Referenced in Requests / Total no. of requests</span>
<span style="left:206.94px;top:1140.20px;font-size:14px;line-height:20px;color:#1c1c1c;transform:scaleX(0.9922);transform-origin:center center;">resolved</span>
<span style="left:482.00px;top:937.20px;font-size:14px;line-height:20px;color:#111;font-weight:bold;transform:scaleX(0.9338);transform-origin:left center;">Most Used Solutions in Requests</span>
<span style="left:493.00px;top:995.80px;font-size:13px;line-height:20px;color:#555;font-weight:bold;">Title</span>
<span style="left:1011.80px;top:995.80px;font-size:13px;line-height:20px;color:#555;font-weight:bold;transform:scaleX(0.9281);transform-origin:left center;">Requests Count</span>
<span style="left:493.00px;top:1027.70px;font-size:13px;line-height:20px;color:#1c1c1c;transform:scaleX(0.9880);transform-origin:left center;">Need to upgrade the OS from Windows 2012 to 2023</span>
<span style="left:1020.69px;top:1030.90px;font-size:13px;line-height:20px;color:#1c1c1c;">6</span>
<span style="left:493.00px;top:1063.70px;font-size:13px;line-height:20px;color:#1c1c1c;transform:scaleX(0.9880);transform-origin:left center;">Unable to login into ERP application using user credentials</span>
<span style="left:1020.69px;top:1066.90px;font-size:13px;line-height:20px;color:#1c1c1c;">5</span>
<span style="left:493.00px;top:1099.70px;font-size:13px;line-height:20px;color:#1c1c1c;transform:scaleX(0.9880);transform-origin:left center;">Clear the paper jam in Printer</span>
<span style="left:1020.69px;top:1102.90px;font-size:13px;line-height:20px;color:#1c1c1c;">3</span>
<span style="left:493.00px;top:1135.70px;font-size:13px;line-height:20px;color:#1c1c1c;transform:scaleX(0.9880);transform-origin:left center;">Generic Manual Uninstalls</span>
<span style="left:1020.69px;top:1138.90px;font-size:13px;line-height:20px;color:#1c1c1c;">2</span>
<span style="left:493.00px;top:1171.70px;font-size:13px;line-height:20px;color:#1c1c1c;transform:scaleX(0.9880);transform-origin:left center;">Troubleshooting DCOM Error</span>
<span style="left:1020.69px;top:1174.90px;font-size:13px;line-height:20px;color:#1c1c1c;">2</span>
<span style="left:38.00px;top:1251.30px;font-size:13px;line-height:20px;color:#111;font-weight:bold;transform:scaleX(0.9379);transform-origin:left center;">Trending Solutions</span>
<span style="left:464.88px;top:1251.50px;font-size:13px;line-height:20px;color:#48a776;transform:scaleX(1.0174);transform-origin:center center;">Most Helpful</span>
<span style="left:566.65px;top:1251.50px;font-size:13px;line-height:20px;color:#111;transform:scaleX(1.0108);transform-origin:center center;">Not Helpful</span>
<span style="left:656.41px;top:1251.50px;font-size:13px;line-height:20px;color:#111;transform:scaleX(1.0060);transform-origin:center center;">Most Commented</span>
<span style="left:54.60px;top:1310.70px;font-size:13px;line-height:20px;color:#555;font-weight:bold;transform:scaleX(0.9817);transform-origin:left center;">Title</span>
<span style="left:571.40px;top:1310.70px;font-size:13px;line-height:20px;color:#555;font-weight:bold;transform:scaleX(0.9138);transform-origin:left center;">Count</span>
<span style="left:54.60px;top:1348.50px;font-size:13px;line-height:20px;color:#1c1c1c;transform:scaleX(0.9880);transform-origin:left center;">Need to upgrade the OS from Windows 2012 to 2023</span>
<span style="left:586.54px;top:1348.80px;font-size:13px;line-height:20px;color:#1c1c1c;">10</span>
<span style="left:54.60px;top:1386.40px;font-size:13px;line-height:20px;color:#1c1c1c;transform:scaleX(0.9880);transform-origin:left center;">Unable to login into ERP application using user credentials</span>
<span style="left:593.77px;top:1388.20px;font-size:13px;line-height:20px;color:#1c1c1c;">5</span>
<span style="left:54.60px;top:1424.30px;font-size:13px;line-height:20px;color:#1c1c1c;transform:scaleX(0.9880);transform-origin:left center;">Clear the paper jam in Printer</span>
<span style="left:593.77px;top:1428.60px;font-size:13px;line-height:20px;color:#1c1c1c;">6</span>
<span style="left:54.60px;top:1462.20px;font-size:13px;line-height:20px;color:#1c1c1c;transform:scaleX(0.9880);transform-origin:left center;">Generic Manual Uninstalls</span>
<span style="left:593.77px;top:1469.10px;font-size:13px;line-height:20px;color:#1c1c1c;">7</span>
<span style="left:54.60px;top:1500.10px;font-size:13px;line-height:20px;color:#1c1c1c;transform:scaleX(0.9880);transform-origin:left center;">Troubleshooting DCOM Error</span>
<span style="left:593.77px;top:1509.00px;font-size:13px;line-height:20px;color:#1c1c1c;">6</span>
<span style="left:826.20px;top:1250.50px;font-size:13px;line-height:20px;color:#111;font-weight:bold;transform:scaleX(0.9324);transform-origin:left center;">Popular Topics / Solutions by Topics</span>
<span style="left:837.20px;top:1304.70px;font-size:13px;line-height:20px;color:#555;font-weight:bold;transform:scaleX(0.8517);transform-origin:left center;">Topic</span>
<span style="left:997.00px;top:1304.70px;font-size:13px;line-height:20px;color:#555;font-weight:bold;transform:scaleX(0.8699);transform-origin:left center;">#Solutions</span>
<span style="left:1093.70px;top:1304.70px;font-size:13px;line-height:20px;color:#555;font-weight:bold;transform:scaleX(0.8903);transform-origin:left center;">Views</span>
<span style="left:1172.70px;top:1304.70px;font-size:13px;line-height:20px;color:#dfe0e3;font-weight:bold;transform:scaleX(0.9013);transform-origin:left center;">Helpful</span>
<span style="left:1227.00px;top:1304.70px;font-size:13px;line-height:20px;color:#dfe0e3;font-weight:bold;transform:scaleX(0.8800);transform-origin:left center;">Not Helpful</span>
<span style="left:837.20px;top:1344.50px;font-size:13px;line-height:20px;color:#1c1c1c;transform:scaleX(0.9880);transform-origin:left center;">Hardware</span>
<span style="left:1020.54px;top:1344.50px;font-size:13px;line-height:20px;color:#1c1c1c;">10</span>
<span style="left:1111.04px;top:1344.50px;font-size:13px;line-height:20px;color:#1c1c1c;">10</span>
<span style="left:1190.65px;top:1344.50px;font-size:12px;line-height:20px;color:#e4e4e4;">10</span>
<span style="left:1262.65px;top:1344.50px;font-size:12px;line-height:20px;color:#e4e4e4;">10</span>
<span style="left:837.20px;top:1382.50px;font-size:13px;line-height:20px;color:#1c1c1c;transform:scaleX(0.9880);transform-origin:left center;">Desktop</span>
<span style="left:1027.77px;top:1382.50px;font-size:13px;line-height:20px;color:#1c1c1c;">5</span>
<span style="left:1118.27px;top:1382.50px;font-size:13px;line-height:20px;color:#1c1c1c;">5</span>
<span style="left:1197.33px;top:1382.50px;font-size:12px;line-height:20px;color:#e4e4e4;">5</span>
<span style="left:1269.33px;top:1382.50px;font-size:12px;line-height:20px;color:#e4e4e4;">5</span>
<span style="left:837.20px;top:1420.50px;font-size:13px;line-height:20px;color:#1c1c1c;transform:scaleX(0.9880);transform-origin:left center;">Printer</span>
<span style="left:1027.77px;top:1420.50px;font-size:13px;line-height:20px;color:#1c1c1c;">6</span>
<span style="left:1118.27px;top:1420.50px;font-size:13px;line-height:20px;color:#1c1c1c;">6</span>
<span style="left:1197.33px;top:1420.50px;font-size:12px;line-height:20px;color:#e4e4e4;">6</span>
<span style="left:1269.33px;top:1420.50px;font-size:12px;line-height:20px;color:#e4e4e4;">6</span>
<span style="left:837.20px;top:1458.50px;font-size:13px;line-height:20px;color:#1c1c1c;transform:scaleX(0.9880);transform-origin:left center;">Network</span>
<span style="left:1027.77px;top:1458.50px;font-size:13px;line-height:20px;color:#1c1c1c;">7</span>
<span style="left:1118.27px;top:1458.50px;font-size:13px;line-height:20px;color:#1c1c1c;">7</span>
<span style="left:1197.33px;top:1458.50px;font-size:12px;line-height:20px;color:#e4e4e4;">7</span>
<span style="left:1269.33px;top:1458.50px;font-size:12px;line-height:20px;color:#e4e4e4;">7</span>
<span style="left:837.20px;top:1496.50px;font-size:13px;line-height:20px;color:#1c1c1c;transform:scaleX(0.9880);transform-origin:left center;">Customisation</span>
<span style="left:1027.77px;top:1496.50px;font-size:13px;line-height:20px;color:#1c1c1c;">6</span>
<span style="left:1118.27px;top:1496.50px;font-size:13px;line-height:20px;color:#1c1c1c;">6</span>
<span style="left:1197.33px;top:1496.50px;font-size:12px;line-height:20px;color:#e4e4e4;">6</span>
<span style="left:1269.33px;top:1496.50px;font-size:12px;line-height:20px;color:#e4e4e4;">6</span>
<span style="left:837.70px;top:1535.00px;font-size:13px;line-height:20px;color:#48a776;font-weight:bold;transform:scaleX(0.9694);transform-origin:left center;">View all</span>
<span style="left:45.50px;top:1607.20px;font-size:13px;line-height:20px;color:#111;font-weight:bold;transform:scaleX(0.9502);transform-origin:left center;">Most Popular/Viewed Solutions</span>
<span style="left:1232.60px;top:1606.85px;font-size:13px;line-height:20px;color:#b5b5b5;transform:scaleX(1.0081);transform-origin:left center;">Last week</span>
<span style="left:46.00px;top:1661.60px;font-size:12px;line-height:20px;color:#1c1c1c;font-weight:bold;transform:scaleX(1.0635);transform-origin:left center;">Title</span>
<span style="left:539.60px;top:1659.50px;font-size:12px;line-height:20px;color:#1c1c1c;font-weight:bold;transform:scaleX(0.9806);transform-origin:left center;">Topic</span>
<span style="left:593.00px;top:1661.60px;font-size:12px;line-height:20px;color:#1c1c1c;font-weight:bold;transform:scaleX(0.9449);transform-origin:left center;">Created by</span>
<span style="left:671.50px;top:1661.60px;font-size:12px;line-height:20px;color:#1c1c1c;font-weight:bold;transform:scaleX(0.9271);transform-origin:left center;">Last Updated On</span>
<span style="left:832.20px;top:1661.60px;font-size:12px;line-height:20px;color:#1c1c1c;font-weight:bold;transform:scaleX(0.9408);transform-origin:left center;">Views</span>
<span style="left:921.00px;top:1661.60px;font-size:12px;line-height:20px;color:#1c1c1c;font-weight:bold;transform:scaleX(0.9690);transform-origin:left center;">Helpful</span>
<span style="left:995.00px;top:1661.60px;font-size:12px;line-height:20px;color:#1c1c1c;font-weight:bold;transform:scaleX(0.9533);transform-origin:left center;">Not Helpful</span>
<span style="left:1091.00px;top:1661.60px;font-size:12px;line-height:20px;color:#1c1c1c;font-weight:bold;transform:scaleX(0.9402);transform-origin:left center;">Comments</span>
<span style="left:1193.30px;top:1661.60px;font-size:12px;line-height:20px;color:#1c1c1c;font-weight:bold;transform:scaleX(0.9427);transform-origin:left center;">Avg. Time Spent</span>
<span style="left:46.00px;top:1703.50px;font-size:13px;line-height:20px;color:#1c1c1c;transform:scaleX(0.9880);transform-origin:left center;">Need to upgrade the OS from Windows 2012 to 2023</span>
<span style="left:847.54px;top:1702.20px;font-size:13px;line-height:20px;color:#1c1c1c;">10</span>
<span style="left:936.54px;top:1702.20px;font-size:13px;line-height:20px;color:#1c1c1c;">10</span>
<span style="left:1028.54px;top:1702.20px;font-size:13px;line-height:20px;color:#1c1c1c;">10</span>
<span style="left:1117.54px;top:1702.20px;font-size:13px;line-height:20px;color:#1c1c1c;">10</span>
<span style="left:1224.66px;top:1702.20px;font-size:13px;line-height:20px;color:#1c1c1c;transform:scaleX(1.0382);transform-origin:center center;">5mins</span>
<span style="left:46.00px;top:1741.70px;font-size:13px;line-height:20px;color:#1c1c1c;transform:scaleX(0.9880);transform-origin:left center;">Unable to login into ERP application using user credentials</span>
<span style="left:854.77px;top:1742.50px;font-size:13px;line-height:20px;color:#1c1c1c;">5</span>
<span style="left:943.77px;top:1742.50px;font-size:13px;line-height:20px;color:#1c1c1c;">5</span>
<span style="left:1035.77px;top:1742.50px;font-size:13px;line-height:20px;color:#1c1c1c;">5</span>
<span style="left:1124.77px;top:1742.50px;font-size:13px;line-height:20px;color:#1c1c1c;">5</span>
<span style="left:46.00px;top:1779.40px;font-size:13px;line-height:20px;color:#1c1c1c;transform:scaleX(0.9880);transform-origin:left center;">Clear the paper jam in Printer</span>
<span style="left:854.77px;top:1782.30px;font-size:13px;line-height:20px;color:#1c1c1c;">6</span>
<span style="left:943.77px;top:1782.30px;font-size:13px;line-height:20px;color:#1c1c1c;">6</span>
<span style="left:1035.77px;top:1782.30px;font-size:13px;line-height:20px;color:#1c1c1c;">6</span>
<span style="left:1124.77px;top:1782.30px;font-size:13px;line-height:20px;color:#1c1c1c;">6</span>
<span style="left:46.00px;top:1817.60px;font-size:13px;line-height:20px;color:#1c1c1c;transform:scaleX(0.9880);transform-origin:left center;">Generic Manual Uninstalls</span>
<span style="left:854.77px;top:1822.60px;font-size:13px;line-height:20px;color:#1c1c1c;">7</span>
<span style="left:943.77px;top:1822.60px;font-size:13px;line-height:20px;color:#1c1c1c;">7</span>
<span style="left:1035.77px;top:1822.60px;font-size:13px;line-height:20px;color:#1c1c1c;">7</span>
<span style="left:1124.77px;top:1822.60px;font-size:13px;line-height:20px;color:#1c1c1c;">7</span>
<span style="left:46.00px;top:1855.80px;font-size:13px;line-height:20px;color:#1c1c1c;transform:scaleX(0.9880);transform-origin:left center;">Troubleshooting DCOM Error</span>
<span style="left:854.77px;top:1862.30px;font-size:13px;line-height:20px;color:#1c1c1c;">6</span>
<span style="left:943.77px;top:1862.30px;font-size:13px;line-height:20px;color:#1c1c1c;">6</span>
<span style="left:1035.77px;top:1862.30px;font-size:13px;line-height:20px;color:#1c1c1c;">6</span>
<span style="left:1124.77px;top:1862.30px;font-size:13px;line-height:20px;color:#1c1c1c;">6</span>
<span style="left:48.00px;top:1902.00px;font-size:13px;line-height:20px;color:#48a776;font-weight:bold;transform:scaleX(0.9483);transform-origin:left center;">View all</span>
<span style="left:39.30px;top:1965.60px;font-size:13px;line-height:20px;color:#111;font-weight:bold;transform:scaleX(0.9558);transform-origin:left center;">Most Active Authors (Technicians)</span>
<span style="left:58.00px;top:2019.50px;font-size:13px;line-height:20px;color:#555;font-weight:bold;transform:scaleX(0.9461);transform-origin:left center;">Name</span>
<span style="left:202.50px;top:2019.50px;font-size:13px;line-height:20px;color:#555;font-weight:bold;transform:scaleX(0.9452);transform-origin:left center;">User Type</span>
<span style="left:297.00px;top:2019.50px;font-size:13px;line-height:20px;color:#555;font-weight:bold;transform:scaleX(0.9387);transform-origin:left center;">Primary Email</span>
<span style="left:420.80px;top:2019.50px;font-size:13px;line-height:20px;color:#555;font-weight:bold;transform:scaleX(0.9455);transform-origin:left center;">#Solutions Created</span>
<span style="left:584.60px;top:2019.50px;font-size:13px;line-height:20px;color:#555;font-weight:bold;transform:scaleX(0.9537);transform-origin:left center;">#Solutions Updated</span>
<span style="left:726.00px;top:2019.50px;font-size:13px;line-height:20px;color:#555;font-weight:bold;transform:scaleX(0.9422);transform-origin:left center;">Views</span>
<span style="left:793.40px;top:2019.50px;font-size:13px;line-height:20px;color:#555;font-weight:bold;transform:scaleX(0.9535);transform-origin:left center;">Helpful</span>
<span style="left:861.50px;top:2019.50px;font-size:13px;line-height:20px;color:#555;font-weight:bold;transform:scaleX(0.9521);transform-origin:left center;">Not Helpful</span>
<span style="left:957.30px;top:2019.50px;font-size:13px;line-height:20px;color:#555;font-weight:bold;transform:scaleX(0.9340);transform-origin:left center;">Searches</span>
<span style="left:1043.60px;top:2019.50px;font-size:13px;line-height:20px;color:#555;font-weight:bold;transform:scaleX(0.9545);transform-origin:left center;">#Solutions Viewed</span>
<span style="left:1172.40px;top:2019.50px;font-size:13px;line-height:20px;color:#555;font-weight:bold;transform:scaleX(0.9222);transform-origin:left center;">Last Login</span>
<span style="left:58.00px;top:2055.60px;font-size:13px;line-height:20px;color:#1c1c1c;transform:scaleX(0.9880);transform-origin:left center;">Heather Graham</span>
<span style="left:58.00px;top:2093.80px;font-size:13px;line-height:20px;color:#1c1c1c;transform:scaleX(0.9880);transform-origin:left center;">Arunkumar</span>
<span style="left:58.00px;top:2131.50px;font-size:13px;line-height:20px;color:#1c1c1c;transform:scaleX(0.9880);transform-origin:left center;">Jennifer Doe</span>
<span style="left:58.00px;top:2169.70px;font-size:13px;line-height:20px;color:#1c1c1c;transform:scaleX(0.9880);transform-origin:left center;">Daniel</span>
<span style="left:58.00px;top:2207.40px;font-size:13px;line-height:20px;color:#1c1c1c;transform:scaleX(0.9880);transform-origin:left center;">Admin User</span>
<span style="left:40.50px;top:2311.30px;font-size:13px;line-height:20px;color:#111;font-weight:bold;transform:scaleX(0.9625);transform-origin:left center;">Most Active Viewers (Technicians)</span>
<span style="left:60.70px;top:2368.30px;font-size:12px;line-height:20px;color:#555;font-weight:bold;transform:scaleX(0.9332);transform-origin:left center;">Name</span>
<span style="left:298.00px;top:2368.30px;font-size:12px;line-height:20px;color:#555;font-weight:bold;transform:scaleX(0.9408);transform-origin:left center;">Views</span>
<span style="left:451.80px;top:2368.30px;font-size:12px;line-height:20px;color:#555;font-weight:bold;transform:scaleX(0.9324);transform-origin:left center;">Last viewed on</span>
<span style="left:60.70px;top:2404.50px;font-size:13px;line-height:20px;color:#1c1c1c;transform:scaleX(0.9880);transform-origin:left center;">Heather Graham</span>
<span style="left:306.07px;top:2404.50px;font-size:13px;line-height:20px;color:#1c1c1c;">25</span>
<span style="left:451.80px;top:2410.40px;font-size:13px;line-height:20px;color:#1c1c1c;transform:scaleX(1.0406);transform-origin:left center;">05/07/2023 11:17 AM</span>
<span style="left:60.70px;top:2442.50px;font-size:13px;line-height:20px;color:#1c1c1c;transform:scaleX(0.9880);transform-origin:left center;">Arunkumar</span>
<span style="left:309.69px;top:2442.50px;font-size:13px;line-height:20px;color:#1c1c1c;">5</span>
<span style="left:451.80px;top:2441.00px;font-size:13px;line-height:20px;color:#1c1c1c;transform:scaleX(1.0406);transform-origin:left center;">05/07/2023 11:17 AM</span>
<span style="left:60.70px;top:2480.50px;font-size:13px;line-height:20px;color:#1c1c1c;transform:scaleX(0.9880);transform-origin:left center;">Jennifer Doe</span>
<span style="left:309.69px;top:2480.50px;font-size:13px;line-height:20px;color:#1c1c1c;">2</span>
<span style="left:451.80px;top:2485.80px;font-size:13px;line-height:20px;color:#1c1c1c;transform:scaleX(1.0406);transform-origin:left center;">05/07/2023 11:17 AM</span>
<span style="left:60.70px;top:2518.50px;font-size:13px;line-height:20px;color:#1c1c1c;transform:scaleX(0.9880);transform-origin:left center;">Daniel</span>
<span style="left:309.69px;top:2518.50px;font-size:13px;line-height:20px;color:#1c1c1c;">3</span>
<span style="left:451.80px;top:2526.80px;font-size:13px;line-height:20px;color:#1c1c1c;transform:scaleX(1.0406);transform-origin:left center;">05/07/2023 11:17 AM</span>
<span style="left:60.70px;top:2556.50px;font-size:13px;line-height:20px;color:#1c1c1c;transform:scaleX(0.9880);transform-origin:left center;">Admin User</span>
<span style="left:309.69px;top:2556.50px;font-size:13px;line-height:20px;color:#1c1c1c;">2</span>
<span style="left:451.80px;top:2561.20px;font-size:13px;line-height:20px;color:#1c1c1c;transform:scaleX(1.0406);transform-origin:left center;">05/07/2023 11:17 AM</span>
<span style="left:823.00px;top:2311.30px;font-size:13px;line-height:20px;color:#111;font-weight:bold;transform:scaleX(0.9428);transform-origin:left center;">Top 10 Technicians resolving requests</span>
<span style="left:837.20px;top:2374.50px;font-size:12px;line-height:20px;color:#555;font-weight:bold;transform:scaleX(0.9485);transform-origin:left center;">Name</span>
<span style="left:1054.00px;top:2374.50px;font-size:12px;line-height:20px;color:#555;font-weight:bold;transform:scaleX(0.9287);transform-origin:left center;">Resolved Requests</span>
<span style="left:837.20px;top:2417.40px;font-size:13px;line-height:20px;color:#1c1c1c;transform:scaleX(0.9880);transform-origin:left center;">Heather Graham</span>
<span style="left:1097.97px;top:2418.40px;font-size:13px;line-height:20px;color:#1c1c1c;">25</span>
<span style="left:837.20px;top:2455.35px;font-size:13px;line-height:20px;color:#1c1c1c;transform:scaleX(0.9880);transform-origin:left center;">Arunkumar</span>
<span style="left:1101.59px;top:2456.35px;font-size:13px;line-height:20px;color:#1c1c1c;">5</span>
<span style="left:837.20px;top:2493.30px;font-size:13px;line-height:20px;color:#1c1c1c;transform:scaleX(0.9880);transform-origin:left center;">Jennifer Doe</span>
<span style="left:1101.59px;top:2494.30px;font-size:13px;line-height:20px;color:#1c1c1c;">2</span>
<span style="left:837.20px;top:2531.25px;font-size:13px;line-height:20px;color:#1c1c1c;transform:scaleX(0.9880);transform-origin:left center;">Daniel</span>
<span style="left:1101.59px;top:2532.25px;font-size:13px;line-height:20px;color:#1c1c1c;">3</span>
<span style="left:837.20px;top:2569.20px;font-size:13px;line-height:20px;color:#1c1c1c;transform:scaleX(0.9880);transform-origin:left center;">Admin User</span>
<span style="left:1101.59px;top:2570.20px;font-size:13px;line-height:20px;color:#1c1c1c;">2</span>
</div>
</body></html>
